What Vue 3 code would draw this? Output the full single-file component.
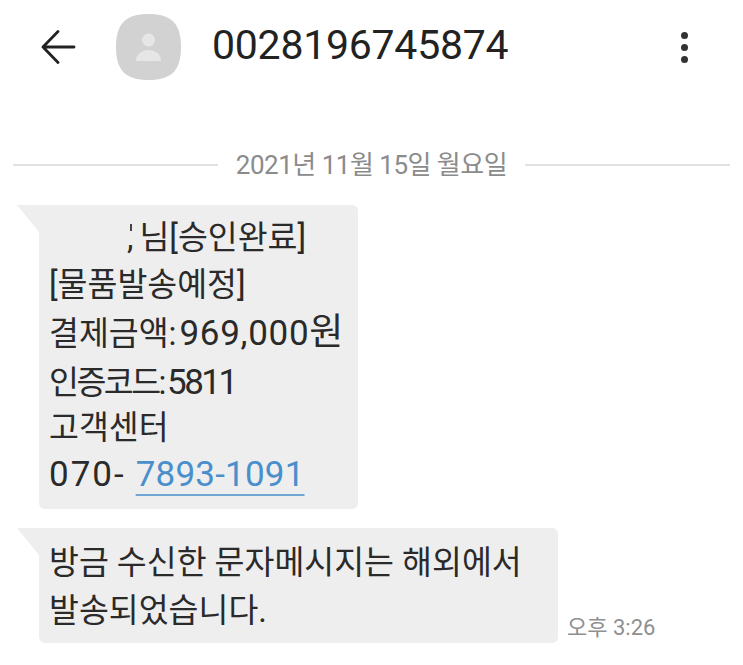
<template>
  <div class="screen">
    <header class="top">
      <svg class="back" width="36" height="34" viewBox="0 0 36 34">
        <path d="M17 1.5 L2 17 L17 32.5 M2 17 H33" fill="none" stroke="#222" stroke-width="2.8" stroke-linecap="round" stroke-linejoin="round" />
      </svg>
      <svg class="avatar" width="65" height="66" viewBox="0 0 65 66">
        <path d="M32.5 0 C56 0 65 10 65 33 C65 56 56 66 32.5 66 C9 66 0 56 0 33 C0 10 9 0 32.5 0 Z" fill="#d2d2d2" />
        <circle cx="32.5" cy="26" r="6.5" fill="#e6e6e6" />
        <path d="M20 47 C20 40 26 36 32.5 36 C39 36 45 40 45 47 Z" fill="#e6e6e6" />
      </svg>
      <div class="number">0028196745874</div>
      <div class="dots"><i></i><i></i><i></i></div>
    </header>

    <div class="date-row">
      <span class="line"></span>
      <span class="date">2021년 11월 15일 월요일</span>
      <span class="line"></span>
    </div>

    <div class="bubble first">
      <div class="tail"></div>
      <div class="row name"><span class="mask"></span><span class="comma">,</span>님[승인완료]</div>
      <div class="row">[물품발송예정]</div>
      <div class="row">결제금액:<span class="num after-colon spaced">969,000</span><span class="won">원</span></div>
      <div class="row tight">인증코드:<span class="num after-colon">5811</span></div>
      <div class="row pull">고객센터</div>
      <div class="row pull"><span class="num prefix">070-</span><a class="tel num">7893-1091</a></div>
    </div>

    <div class="last">
      <div class="bubble second">
        <div class="tail"></div>
        <div class="row">방금 수신한 문자메시지는 해외에서</div>
        <div class="row">발송되었습니다.</div>
      </div>
      <span class="time">오후 3:26</span>
    </div>
  </div>
</template>

<script setup>
</script>

<style>
html, body { background: #fff; }
</style>

<style scoped>
.screen {
  width: 743px;
  height: 665px;
  background: #fff;
  overflow: hidden;
  font-family: Roboto, "Noto Sans CJK KR", sans-serif;
  color: #222;
}
.top {
  display: flex;
  align-items: center;
  height: 94px;
  padding: 0 0 0 41px;
  box-sizing: border-box;
}
.back { flex: none; margin-right: 39px; }
.avatar { flex: none; margin-right: 31px; }
.number {
  font-size: 41px;
  letter-spacing: -0.25px;
  margin-top: -4px;
  flex: 1;
}
.dots {
  display: flex;
  flex-direction: column;
  gap: 5px;
  margin-right: 55px;
}
.dots i {
  display: block;
  width: 7px;
  height: 7px;
  border-radius: 50%;
  background: #333;
}
.date-row {
  display: flex;
  align-items: center;
  margin-top: 51px;
  padding: 0 13px;
  gap: 18px;
}
.line { flex: 1; height: 2px; background: #e2e2e2; }
.date { font-size: 26px; line-height: 40px; color: #8b8b8b; letter-spacing: -0.5px; }
.bubble {
  position: relative;
  background: #eeeeee;
  border-radius: 6px;
  border-top-left-radius: 0;
  box-sizing: border-box;
  font-size: 32.5px;
  line-height: 47.6px;
  color: #2a2a2a;
}
.first {
  width: 319px;
  height: 304px;
  margin: 20px 0 0 39px;
  padding: 10px 0 0 10px;
}
.first .row:nth-child(3) { margin-top: -1px; }
.tail {
  position: absolute;
  left: -22px;
  top: 0;
  width: 0;
  height: 0;
  border-top: 27px solid #eeeeee;
  border-left: 22px solid transparent;
}
.row { white-space: nowrap; }
.pull { margin-top: -2px; }
.name { display: flex; }
.mask { width: 78px; }
.comma { position: relative; margin-right: 6px; }
.comma::before {
  content: "";
  position: absolute;
  left: 3px;
  top: 9px;
  width: 2px;
  height: 7px;
  background: #444;
}
.num { font-size: 35px; }
.after-colon { margin-left: 3px; }
.spaced { letter-spacing: 0.7px; }
.won { font-size: 37px; }
.tight { letter-spacing: -2.5px; }
.prefix { letter-spacing: 2px; }
.tel {
  margin-left: 10px;
  letter-spacing: 0.2px;
  color: #4a8fcb;
  text-decoration: underline;
  text-decoration-color: #6fa6d6;
  text-decoration-thickness: 1.5px;
  text-decoration-skip-ink: none;
  text-underline-offset: 8px;
}
.last {
  display: flex;
  align-items: flex-end;
  margin: 19px 0 0 39px;
}
.second { width: 519px; height: 115px; padding: 12px 0 0 10px; }
.time { margin: 0 0 1px 9px; font-size: 22px; color: #8f8f8f; line-height: 28px; }
</style>
